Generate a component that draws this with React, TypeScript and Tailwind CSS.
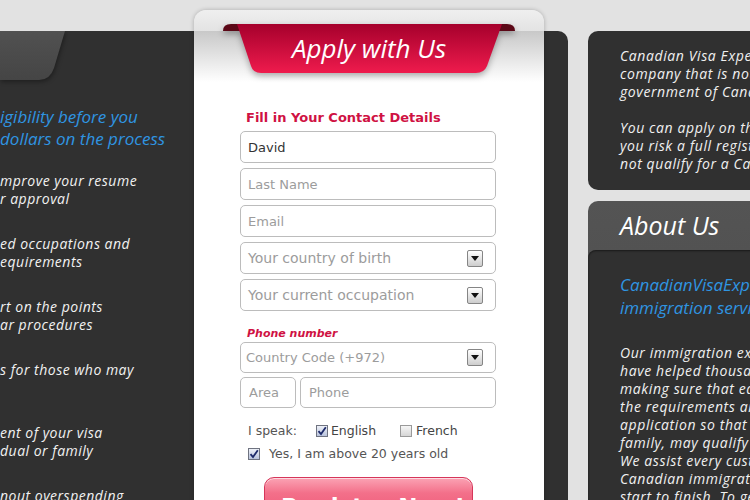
const italic = { fontFamily: '"Open Sans", "DejaVu Sans", sans-serif' };

const leftItems = [
  ["mprove your resume", "r approval"],
  ["ed occupations and", "equirements"],
  ["rt on the points", "ar procedures"],
  ["s for those who may", "\u00a0"],
  ["ent of your visa", "dual or family"],
  ["nout overspending", "\u00a0"],
];

const SelectArrow = () => (
  <span className="flex h-[17px] w-[16px] items-center justify-center rounded-[2px] border border-[#858585] bg-[linear-gradient(to_bottom,#ffffff,#cdcdcd)]">
    <svg width="8" height="5" viewBox="0 0 8 5">
      <polygon points="0,0 8,0 4,5" fill="#111" />
    </svg>
  </span>
);

const Checkbox = ({ checked }: { checked?: boolean }) =>
  checked ? (
    <span className="flex h-[12px] w-[12px] items-center justify-center border border-[#6f7380] bg-[linear-gradient(to_bottom,#eef1f8,#b9c3dc)]">
      <svg width="10" height="10" viewBox="0 0 10 10">
        <path d="M1.5 5.2 L4 8 L8.8 1.2" stroke="#1d2a6a" strokeWidth="1.8" fill="none" />
      </svg>
    </span>
  ) : (
    <span className="block h-[12px] w-[12px] border border-[#9a9a9a] bg-[linear-gradient(to_bottom,#f6f6f6,#d6d6d6)]" />
  );

const App = () => {
  return (
    <div className="flex h-[500px] w-[750px] overflow-hidden bg-[#e2e2e2]">
      {/* left dark panel, the form sits inside it and sticks out at the top */}
      <div className="mt-[31px] flex h-[520px] w-[568px] shrink-0 rounded-tr-[10px] bg-[#303030]">
        <div className="w-[194px] shrink-0 overflow-hidden whitespace-nowrap" style={italic}>
          <svg width="70" height="49" viewBox="0 0 70 49" className="block drop-shadow-[1px_2px_2px_rgba(0,0,0,0.35)]">
            <defs>
              <linearGradient id="tab" x1="0" y1="0" x2="0" y2="1">
                <stop offset="0" stopColor="#515151" />
                <stop offset="1" stopColor="#454545" />
              </linearGradient>
            </defs>
            <path d="M0 0 H65 L54 37 Q50 49 39 49 H0 Z" fill="url(#tab)" />
          </svg>
          <div className="mt-[26px] text-[17px] italic leading-[22px] text-[#2f95e2]">
            <div>igibility before you</div>
            <div>dollars on the process</div>
          </div>
          <div className="mt-[22px] text-[14px] italic leading-[18px] tracking-[0.5px] text-[#f2f2f2]">
            {leftItems.map((item, i) => (
              <div key={i} className="mb-[27px]">
                <div>{item[0]}</div>
                <div>{item[1]}</div>
              </div>
            ))}
          </div>
        </div>

        {/* Apply form */}
        <div className="-mt-[21px] flex h-[530px] w-[350px] shrink-0 flex-col rounded-t-[12px] bg-[linear-gradient(to_bottom,#efefef_0px,#e3e3e3_21px,#c8c8c8_21px,#ffffff_72px)] pt-[14px] shadow-[0_0_4px_rgba(0,0,0,0.25)]">
          <div className="relative h-[49px] w-[292px] self-center">
            <svg width="292" height="52" viewBox="0 0 292 52" className="absolute left-0 top-0 drop-shadow-[0_3px_3px_rgba(0,0,0,0.3)]">
              <defs>
                <linearGradient id="rib" x1="0" y1="0" x2="0" y2="1">
                  <stop offset="0" stopColor="#a5002c" />
                  <stop offset="1" stopColor="#ef1b4d" />
                </linearGradient>
              </defs>
              <path d="M0 7 Q0 0 8 0 H17 V7 Z" fill="#5b0716" />
              <path d="M292 7 Q292 0 284 0 H275 V7 Z" fill="#5b0716" />
              <path d="M14 0 H279 L264 42 Q261 49 253 49 H38 Q30 49 28 42 Z" fill="url(#rib)" />
            </svg>
            <div className="absolute inset-0 flex items-center justify-center text-[26px] italic text-white" style={italic}>
              Apply with Us
            </div>
          </div>

          <div className="flex flex-col pl-[46px] pr-[48px]" style={{ fontFamily: '"DejaVu Sans", sans-serif' }}>
            <div className="mt-[36px] pl-[6px] text-[13px] font-bold leading-[18px] text-[#cf1243]">
              Fill in Your Contact Details
            </div>
            <input
              defaultValue="David"
              className="mt-[4px] h-[32px] rounded-[5px] border border-[#bcbcbc] px-[7px] text-[13px] text-[#333] outline-none"
            />
            {["Last Name", "Email"].map((p) => (
              <input
                key={p}
                placeholder={p}
                className="mt-[5px] h-[32px] rounded-[5px] border border-[#bcbcbc] px-[7px] text-[13px] text-[#333] outline-none placeholder:text-[#9c9c9c]"
              />
            ))}
            {["Your country of birth", "Your current occupation"].map((p) => (
              <div
                key={p}
                className="mt-[5px] flex h-[32px] items-center justify-between rounded-[5px] border border-[#bcbcbc] pl-[7px] pr-[12px] text-[14px] text-[#9c9c9c]"
              >
                <span>{p}</span>
                <SelectArrow />
              </div>
            ))}

            <div className="mt-[15px] pl-[7px] text-[11px] font-bold italic leading-[16px] text-[#cf1243]">
              Phone number
            </div>
            <div className="flex h-[31px] items-center justify-between rounded-[5px] border border-[#bcbcbc] pl-[5px] pr-[12px] text-[13px] text-[#9c9c9c]">
              <span>Country Code (+972)</span>
              <SelectArrow />
            </div>
            <div className="mt-[4px] flex gap-[4px]">
              <input
                placeholder="Area"
                className="h-[31px] w-[56px] rounded-[5px] border border-[#bcbcbc] px-[8px] text-[13px] outline-none placeholder:text-[#9c9c9c]"
              />
              <input
                placeholder="Phone"
                className="h-[31px] min-w-0 flex-1 rounded-[5px] border border-[#bcbcbc] px-[8px] text-[13px] outline-none placeholder:text-[#9c9c9c]"
              />
            </div>

            <div className="mt-[14px] flex h-[18px] items-center pl-[8px] text-[12.5px] text-[#555]">
              <span>I speak:</span>
              <span className="ml-[19px]">
                <Checkbox checked />
              </span>
              <span className="ml-[3px] text-[#444]">English</span>
              <span className="ml-[24px]">
                <Checkbox />
              </span>
              <span className="ml-[4px] text-[#444]">French</span>
            </div>
            <div className="mt-[5px] flex h-[18px] items-center pl-[8px] text-[12.5px] text-[#555]">
              <Checkbox checked />
              <span className="ml-[9px]">Yes, I am above 20 years old</span>
            </div>

            <button className="mt-[14px] h-[52px] w-[209px] self-center rounded-[10px] border border-[#d6365a] bg-[linear-gradient(to_bottom,#fba3b4_0%,#f3708a_30%,#ee4d6d_100%)] pl-[10px] pt-[8px] text-[23px] font-bold text-white shadow-[inset_0_1px_0_rgba(255,255,255,0.6)]">
              Register Now!
            </button>
          </div>
        </div>
      </div>

      {/* right column */}
      <div className="ml-[20px] flex w-[300px] shrink-0 flex-col whitespace-nowrap" style={italic}>
        <div className="mt-[31px] h-[159px] shrink-0 rounded-[10px] bg-[#303030] pl-[32px] pt-[16px] text-[14px] italic leading-[18px] tracking-[0.6px] text-[#f0f0f0]">
          <div>Canadian Visa Experts is a private</div>
          <div>company that is not affiliated with the</div>
          <div>government of Canada.</div>
          <div className="mt-[18px]">You can apply on the official website but</div>
          <div>you risk a full registration fee if you do</div>
          <div>not qualify for a Canadian visa.</div>
        </div>

        <div className="mt-[11px] flex h-[320px] shrink-0 flex-col rounded-t-[10px] bg-[linear-gradient(to_bottom,#545454,#474747)]">
          <div className="h-[49px] shrink-0 pl-[32px] text-[25px] italic leading-[49px] text-white">About Us</div>
          <div className="flex-1 rounded-t-[8px] bg-[#303030] pl-[32px] pt-[23px] shadow-[inset_0_1px_2px_rgba(0,0,0,0.5)]">
            <div className="text-[17px] italic leading-[23px] text-[#2f95e2]">
              <div>CanadianVisaExperts.com is a private</div>
              <div>immigration services company</div>
            </div>
            <div className="mt-[25px] text-[14px] italic leading-[18px] tracking-[0.6px] text-[#f0f0f0]">
              <div>Our immigration experts and lawyers</div>
              <div>have helped thousands of clients by</div>
              <div>making sure that each one meets</div>
              <div>the requirements and completes the</div>
              <div>application so that they, and their</div>
              <div>family, may qualify for a visa.</div>
              <div>We assist every customer with the</div>
              <div>Canadian immigration process from</div>
              <div>start to finish. To get started</div>
            </div>
          </div>
        </div>
      </div>
    </div>
  );
};

export default App;
